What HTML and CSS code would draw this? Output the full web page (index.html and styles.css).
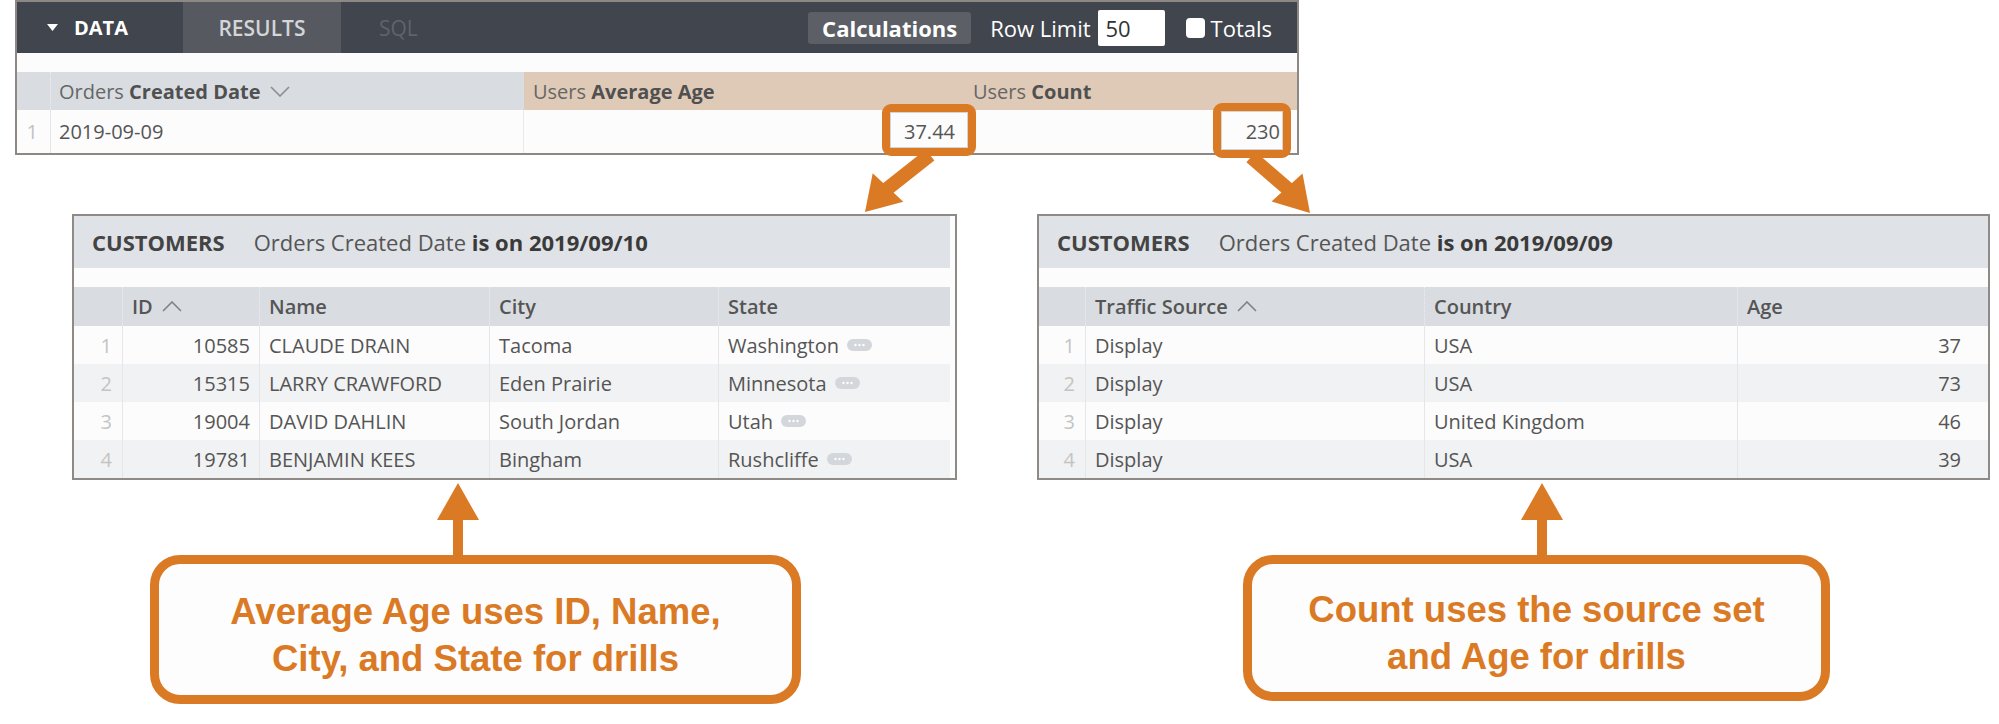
FILE: index.html
```html
<!DOCTYPE html>
<html lang="en">
<head>
<meta charset="utf-8">
<title>Drill fields</title>
<link rel="stylesheet" href="styles.css">
</head>
<body>
<div class="canvas">
  <section class="explore">
    <div class="toolbar">
      <div class="tab tab-data"><svg class="caret" width="11" height="7" viewBox="0 0 11 7"><path d="M0 0H11L5.5 7Z" fill="#fff"/></svg><span>DATA</span></div>
      <div class="tab tab-results">RESULTS</div>
      <div class="tab tab-sql">SQL</div>
      <div class="tools">
        <div class="calc">Calculations</div>
        <span class="rowlimit">Row Limit</span>
        <span class="limit-input">50</span>
        <span class="checkbox"></span>
        <span class="totals">Totals</span>
      </div>
    </div>
    <div class="strip"></div>
    <div class="rrow rhead">
      <div class="rc rnum dim"></div>
      <div class="rc dim">Orders&nbsp;<b>Created Date</b><svg class="chev" width="20" height="11" viewBox="0 0 20 11"><path d="M1 1L10 10L19 1" fill="none" stroke="#8a8d92" stroke-width="1.6"/></svg></div>
      <div class="rc meas">Users&nbsp;<b>Average Age</b></div>
      <div class="rc meas">Users&nbsp;<b>Count</b></div>
    </div>
    <div class="rrow rbody">
      <div class="rc rnum">1</div>
      <div class="rc">2019-09-09</div>
      <div class="rc right">37.44</div>
      <div class="rc right pad-count">230</div>
    </div>
  </section>

  <div class="drills">
    <section class="drill drill-left">
      <div class="drill-head"><span class="model">CUSTOMERS</span><span class="filter">Orders Created Date <b>is on 2019/09/10</b></span></div>
      <div class="drill-gap"></div>
      <div class="drow dhead cols-left">
        <div class="dc"></div>
        <div class="dc">ID<svg class="chev-up" width="20" height="11" viewBox="0 0 20 11"><path d="M1 10L10 1L19 10" fill="none" stroke="#7f8287" stroke-width="1.6"/></svg></div>
        <div class="dc">Name</div>
        <div class="dc">City</div>
        <div class="dc">State</div>
      </div>
      <div class="drow cols-left">
        <div class="dc num">1</div><div class="dc right">10585</div><div class="dc">CLAUDE DRAIN</div><div class="dc">Tacoma</div><div class="dc">Washington<svg class="more" width="25" height="12" viewBox="0 0 25 12"><rect width="25" height="12" rx="6" fill="#d3d7dc"/><circle cx="8.5" cy="6" r="1.2" fill="#fff"/><circle cx="12.5" cy="6" r="1.2" fill="#fff"/><circle cx="16.5" cy="6" r="1.2" fill="#fff"/></svg></div>
      </div>
      <div class="drow alt cols-left">
        <div class="dc num">2</div><div class="dc right">15315</div><div class="dc">LARRY CRAWFORD</div><div class="dc">Eden Prairie</div><div class="dc">Minnesota<svg class="more" width="25" height="12" viewBox="0 0 25 12"><rect width="25" height="12" rx="6" fill="#d3d7dc"/><circle cx="8.5" cy="6" r="1.2" fill="#fff"/><circle cx="12.5" cy="6" r="1.2" fill="#fff"/><circle cx="16.5" cy="6" r="1.2" fill="#fff"/></svg></div>
      </div>
      <div class="drow cols-left">
        <div class="dc num">3</div><div class="dc right">19004</div><div class="dc">DAVID DAHLIN</div><div class="dc">South Jordan</div><div class="dc">Utah<svg class="more" width="25" height="12" viewBox="0 0 25 12"><rect width="25" height="12" rx="6" fill="#d3d7dc"/><circle cx="8.5" cy="6" r="1.2" fill="#fff"/><circle cx="12.5" cy="6" r="1.2" fill="#fff"/><circle cx="16.5" cy="6" r="1.2" fill="#fff"/></svg></div>
      </div>
      <div class="drow alt cols-left">
        <div class="dc num">4</div><div class="dc right">19781</div><div class="dc">BENJAMIN KEES</div><div class="dc">Bingham</div><div class="dc">Rushcliffe<svg class="more" width="25" height="12" viewBox="0 0 25 12"><rect width="25" height="12" rx="6" fill="#d3d7dc"/><circle cx="8.5" cy="6" r="1.2" fill="#fff"/><circle cx="12.5" cy="6" r="1.2" fill="#fff"/><circle cx="16.5" cy="6" r="1.2" fill="#fff"/></svg></div>
      </div>
    </section>

    <section class="drill drill-right">
      <div class="drill-head"><span class="model">CUSTOMERS</span><span class="filter">Orders Created Date <b>is on 2019/09/09</b></span></div>
      <div class="drill-gap"></div>
      <div class="drow dhead cols-right">
        <div class="dc"></div>
        <div class="dc">Traffic Source<svg class="chev-up" width="20" height="11" viewBox="0 0 20 11"><path d="M1 10L10 1L19 10" fill="none" stroke="#7f8287" stroke-width="1.6"/></svg></div>
        <div class="dc">Country</div>
        <div class="dc">Age</div>
      </div>
      <div class="drow cols-right">
        <div class="dc num">1</div><div class="dc">Display</div><div class="dc">USA</div><div class="dc right pad-age">37</div>
      </div>
      <div class="drow alt cols-right">
        <div class="dc num">2</div><div class="dc">Display</div><div class="dc">USA</div><div class="dc right pad-age">73</div>
      </div>
      <div class="drow cols-right">
        <div class="dc num">3</div><div class="dc">Display</div><div class="dc">United Kingdom</div><div class="dc right pad-age">46</div>
      </div>
      <div class="drow alt cols-right">
        <div class="dc num">4</div><div class="dc">Display</div><div class="dc">USA</div><div class="dc right pad-age">39</div>
      </div>
    </section>
  </div>

  <div class="callouts">
    <div class="callout callout-left"><p>Average Age uses ID, Name,<br>City, and State for drills</p></div>
    <div class="callout callout-right"><p>Count uses the source set<br>and Age for drills</p></div>
  </div>

  <svg class="annotations" width="1999" height="724" viewBox="0 0 1999 724">
    <g fill="none" stroke="#db7a24" stroke-width="8">
      <rect x="886" y="108" width="86" height="44" rx="5"/>
      <rect x="1217" y="107" width="70" height="47" rx="5"/>
    </g>
    <g fill="none" stroke="#d4d4d4" stroke-width="1">
      <rect x="890.5" y="112.5" width="77" height="35"/>
      <rect x="1221.5" y="111.5" width="61" height="38"/>
    </g>
    <g stroke="#db7a24" stroke-width="14" stroke-linecap="butt">
      <line x1="930" y1="155" x2="887" y2="189"/>
      <line x1="1251" y1="157" x2="1288" y2="189"/>
    </g>
    <g fill="#db7a24">
      <polygon points="865,212 872.7,173.2 903.3,201.8"/>
      <polygon points="1310,213 1302.5,173.4 1271.5,201.6"/>
      <polygon points="458,483 437,520 479,520"/>
      <rect x="453" y="519" width="10" height="38"/>
      <polygon points="1542,483 1521,520 1563,520"/>
      <rect x="1537" y="519" width="10" height="38"/>
    </g>
  </svg>
</div>
</body>
</html>
```

FILE: styles.css
```css
* { box-sizing: border-box; }
html, body { margin: 0; padding: 0; background: #ffffff; }
body { font-family: "Open Sans", "DejaVu Sans", sans-serif; font-size: 20px; color: #555; }

.canvas { position: relative; width: 1999px; height: 724px; overflow: hidden; }

/* ---------- explore panel ---------- */
.explore {
  margin-left: 15px;
  width: 1284px;
  height: 155px;
  border: 2px solid #8d8883;
  background: #fcfcfc;
}
.toolbar { display: flex; height: 51px; background: #41454d; }
.tab { display: flex; align-items: center; font-size: 20px; }
.tab-data { width: 166px; padding-left: 30px; gap: 16px; color: #fff; font-weight: 700; }
.tab-results { width: 158px; justify-content: center; background: #56595f; color: #d4d5d7; font-size: 21px; font-weight: 600; }
.tab-sql { padding-left: 38px; color: #5f646c; font-size: 21px; }
.tools { margin-left: auto; display: flex; align-items: center; padding-right: 25px; color: #fff; font-size: 22px; }
.calc {
  width: 163px; height: 32px; border-radius: 3px; background: #5c5f65;
  display: flex; align-items: center; justify-content: center;
  font-weight: 700; color: #fff;
}
.rowlimit { margin-left: 19px; }
.limit-input {
  margin-left: 7px; width: 67px; height: 36px; background: #fff; border-radius: 2px;
  color: #333; padding-left: 8px; display: flex; align-items: center;
}
.checkbox { margin-left: 21px; width: 19px; height: 20px; background: #fff; border-radius: 4px; }
.totals { margin-left: 6px; }

.strip { height: 19px; background: #fcfcfc; }
.rrow { display: grid; grid-template-columns: 34px 473px 440px 1fr; }
.rhead { height: 38px; }
.rbody { height: 43px; background: #fcfcfc; }
.rc { display: flex; align-items: center; padding: 0 8px; white-space: nowrap; color: #555; }
.rc b { font-weight: 700; color: #505050; }
.rhead .rc { color: #666; }
.rc.dim { background: #d9dde2; }
.rc.meas { background: #dfcab8; padding-left: 9px; }
.rc.rnum { justify-content: flex-end; padding-right: 12px; color: #c2c2c2; border-right: 1px solid #e3e5e8; }
.rhead .rc.rnum { border-right: 1px dotted #eceef0; }
.rbody .rc:nth-child(2) { border-right: 1px solid #eaeaea; }
.rc.right { justify-content: flex-end; padding-right: 9px; }
.rc.pad-count { padding-right: 17px; }
.chev { margin-left: 9px; }

/* ---------- drill panels ---------- */
.drills { display: flex; margin-top: 59px; align-items: flex-start; }
.drill { border: 2px solid #8f8a85; background: #fcfcfc; }
.drill-left { margin-left: 72px; width: 885px; padding-right: 5px; }
.drill-right { margin-left: 80px; width: 953px; }
.drill-head {
  height: 52px; background: #dfe2e6; display: flex; align-items: center;
  padding-left: 18px; white-space: nowrap; font-size: 22px;
}
.model { font-weight: 700; color: #444; }
.filter { margin-left: 29px; color: #555; }
.filter b { font-weight: 700; color: #3a3a3a; }
.drill-gap { height: 19px; }
.drow { display: grid; height: 38px; }
.cols-left { grid-template-columns: 48px 137px 230px 229px 232px; }
.cols-right { grid-template-columns: 46px 339px 313px 251px; }
.drow.alt { background: #f1f2f3; }
.dhead { height: 39px; background: #d9dde2; }
.dc {
  display: flex; align-items: center; padding: 0 9px; white-space: nowrap;
  color: #555; border-left: 1px solid #e4e6e9;
}
.dc:first-child { border-left: none; }
.dhead .dc { font-weight: 600; color: #555; border-left: 1px dotted #eceef1; }
.dhead .dc:first-child { border-left: none; }
.dc.num { justify-content: flex-end; padding-right: 10px; color: #c4c4c4; }
.dc.right { justify-content: flex-end; }
.dc.pad-age { padding-right: 27px; }
.chev-up { margin-left: 9px; }
.more { margin-left: 8px; }

/* ---------- callouts ---------- */
.callouts { display: flex; margin-top: 75px; align-items: flex-start; }
.callout {
  border: 9px solid #db7a24; border-radius: 30px; background: #fdfdfd;
  display: flex; align-items: center; justify-content: center;
  font-family: "Liberation Sans", Arial, sans-serif; font-weight: 700;
  font-size: 36.5px; line-height: 47px; color: #db7a24; text-align: center;
}
.callout p { margin: 0; padding-top: 10px; }
.callout-left { margin-left: 150px; width: 651px; height: 149px; }
.callout-right { margin-left: 442px; width: 587px; height: 146px; }

/* ---------- annotation overlay ---------- */
.annotations { position: absolute; left: 0; top: 0; pointer-events: none; }
```
